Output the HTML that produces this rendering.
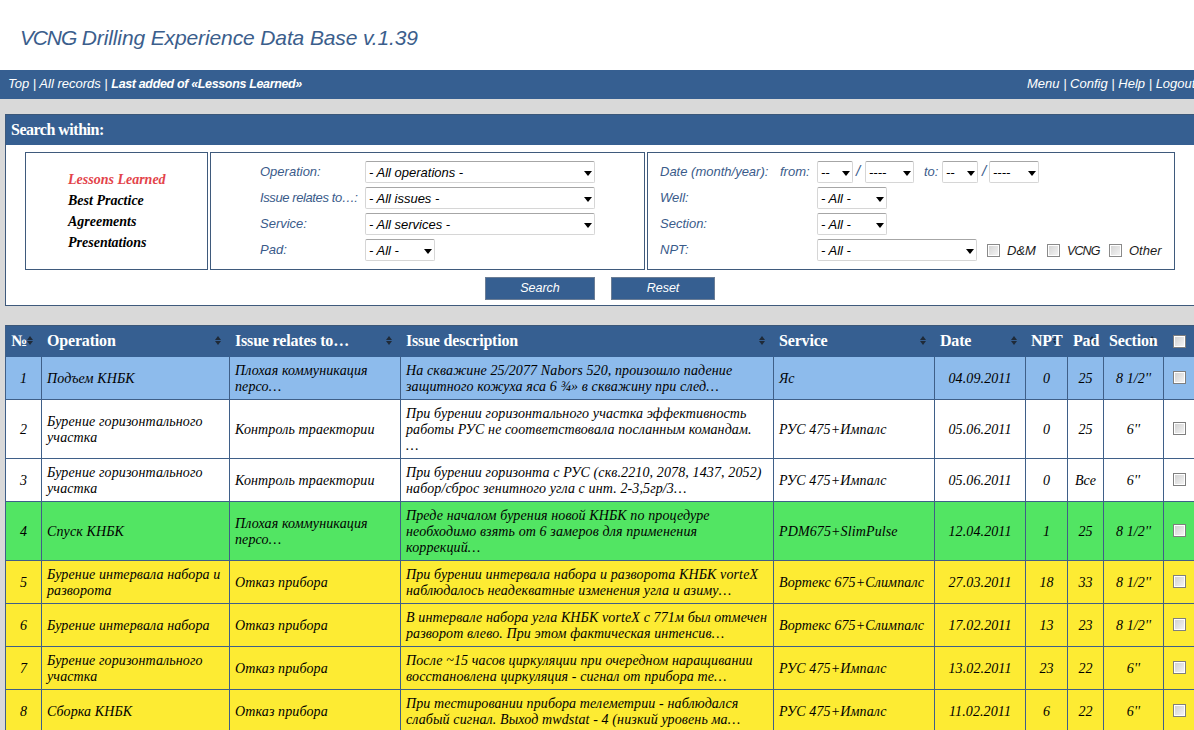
<!DOCTYPE html>
<html><head><meta charset="utf-8">
<style>
*{box-sizing:border-box}
html,body{margin:0;padding:0}
body{width:1194px;height:730px;overflow:hidden;position:relative;background:#d9d9d9;font-family:"Liberation Sans",sans-serif}
#top{position:absolute;left:0;top:0;width:1194px;height:70px;background:#fff}
#title{position:absolute;left:20px;top:26px;letter-spacing:-0.12px;font:italic 21px "Liberation Sans",sans-serif;color:#3b5e8c;white-space:nowrap}
#nav{position:absolute;left:0;top:70px;width:1194px;height:29px;background:#365f91;color:#fff;font:italic 13px "Liberation Sans",sans-serif;white-space:nowrap}
#nav .l{position:absolute;left:8px;top:6px}
#nav .r{position:absolute;left:1027px;top:6px}
#nav b{font-weight:bold;font-size:12.5px;letter-spacing:-0.35px}
#sb{position:absolute;left:5px;top:114px;width:1195px;height:192px;background:#fff;border:1px solid #3f5a7c;border-top:0}
#sbh{position:absolute;left:0;top:0;width:100%;height:31px;background:#365f91;box-shadow:inset 0 1px 0 #3b5778;color:#fff;letter-spacing:-0.5px;font:bold 16px "Liberation Serif",serif}
#sbh span{position:absolute;left:5px;top:7px}
.box{position:absolute;border:1px solid #3f5a7c;background:#fff}
.lst{position:absolute;font:bold italic 14px "Liberation Serif",serif;color:#000;line-height:21px}
.lbl{position:absolute;font:italic 13px "Liberation Sans",sans-serif;color:#3a5b8a;white-space:nowrap}
.sel{position:absolute;height:22px;border:1px solid #d6d6d6;border-top-color:#a6a6a6;border-radius:2px;background:#fff;font:italic 13px "Liberation Sans",sans-serif;color:#000;white-space:nowrap}
.sel span{position:absolute;left:3px;top:3px}
.sel i{position:absolute;right:2px;top:9px;width:0;height:0;border-left:4px solid transparent;border-right:4px solid transparent;border-top:5px solid #000}
.btn{position:absolute;top:277px;height:23px;background:#365f91;border:1px solid #6b7d95;color:#fff;font:italic 12.5px "Liberation Sans",sans-serif;text-align:center;line-height:21px}
.cb{position:absolute;width:13px;height:13px;border:1px solid #8a8a8a;box-shadow:inset 0 0 0 1px #fff;background:linear-gradient(135deg,#d2d2d2,#f6f6f6)}
.ck{position:absolute;font:italic 13px "Liberation Sans",sans-serif;color:#1b1b1b;white-space:nowrap}
#tb{position:absolute;left:5px;top:325px;width:1190px;table-layout:fixed;border-collapse:separate;border-spacing:0;border-left:1px solid #3f5f88;font:italic 14px "Liberation Serif",serif;color:#000}
#tb td{border-right:1px solid #3f5f88;border-bottom:1px solid #3f5f88;padding:2px 5px 0;line-height:16px;letter-spacing:0.12px;vertical-align:middle;white-space:nowrap;overflow:hidden}
#tb td.c{text-align:center;padding:2px 0 0}
#tb td.k{padding:0;line-height:0}
#tb td.k .cb2{display:block;margin:-1px 0 0 9px}
#tb tr.hd{height:32px;background:#365f91}
#tb th{position:relative;box-shadow:inset 0 1px 0 #3b5778;text-align:left;padding:0 5px;font:bold 16px "Liberation Serif",serif;letter-spacing:-0.18px;color:#fff;line-height:32px;white-space:nowrap;overflow:visible}
#tb th s{position:absolute;right:7.5px;top:11px;width:8px;height:10px;z-index:0}
#tb th u{position:relative;z-index:1;text-decoration:none}
#tb th s:before{content:"";position:absolute;left:0;top:0;border-left:3.75px solid transparent;border-right:3.75px solid transparent;border-bottom:4px solid #1f2a38}
#tb th s:after{content:"";position:absolute;left:0;top:5px;border-left:3.75px solid transparent;border-right:3.75px solid transparent;border-top:4px solid #1f2a38}
.cb2{display:inline-block;width:13px;height:13px;border:1px solid #7f7f7f;box-shadow:inset 0 0 0 1px #fff;background:linear-gradient(135deg,#cfcfcf,#f6f6f6);vertical-align:middle}
</style></head><body>
<div id="top"><div id="title"><span style="letter-spacing:-1.15px">VCNG</span> Drilling Experience Data Base v.1.39</div></div>
<div id="nav"><span class="l">Top | All records | <b>Last added of «Lessons Learned»</b></span><span class="r">Menu | Config | Help | Logout</span></div>
<div id="sb">
 <div id="sbh"><span>Search within:</span></div>
</div>
<!-- boxes positioned in page coordinates -->
<div class="box" style="left:25px;top:152px;width:183px;height:118px"></div>
<div class="box" style="left:210px;top:152px;width:435px;height:118px"></div>
<div class="box" style="left:647px;top:152px;width:528px;height:118px"></div>
<div class="lst" style="left:68px;top:169px"><span style="color:#e3434a">Lessons Learned</span><br>Best Practice<br>Agreements<br>Presentations</div>

<div class="lbl" style="left:260px;top:164px">Operation:</div>
<div class="lbl" style="left:260px;top:190px;letter-spacing:-0.4px">Issue relates to…:</div>
<div class="lbl" style="left:260px;top:216px">Service:</div>
<div class="lbl" style="left:260px;top:242px">Pad:</div>
<div class="sel" style="left:365px;top:161px;width:230px"><span>- All operations -</span><i></i></div>
<div class="sel" style="left:365px;top:187px;width:230px"><span>- All issues -</span><i></i></div>
<div class="sel" style="left:365px;top:213px;width:230px"><span>- All services -</span><i></i></div>
<div class="sel" style="left:365px;top:239px;width:70px"><span>- All -</span><i></i></div>

<div class="lbl" style="left:660px;top:164px">Date (month/year):</div><div class="lbl" style="left:780px;top:164px">from:</div>
<div class="lbl" style="left:660px;top:190px">Well:</div>
<div class="lbl" style="left:660px;top:216px">Section:</div>
<div class="lbl" style="left:660px;top:242px">NPT:</div>
<div class="sel" style="left:817px;top:161px;width:36px"><span>--</span><i></i></div>
<div class="lbl" style="left:856px;top:162px;font-size:15px">/</div>
<div class="sel" style="left:865px;top:161px;width:49px"><span>----</span><i></i></div>
<div class="lbl" style="left:924px;top:164px">to:</div>
<div class="sel" style="left:942px;top:161px;width:36px"><span>--</span><i></i></div>
<div class="lbl" style="left:982px;top:162px;font-size:15px">/</div>
<div class="sel" style="left:989px;top:161px;width:50px"><span>----</span><i></i></div>
<div class="sel" style="left:817px;top:187px;width:70px"><span>- All -</span><i></i></div>
<div class="sel" style="left:817px;top:213px;width:70px"><span>- All -</span><i></i></div>
<div class="sel" style="left:817px;top:239px;width:160px"><span>- All -</span><i></i></div>
<div class="cb" style="left:987px;top:244px"></div><div class="ck" style="left:1007px;top:243px">D&amp;M</div>
<div class="cb" style="left:1047px;top:244px"></div><div class="ck" style="left:1067px;top:244px;letter-spacing:-0.9px;font-size:12.5px">VCNG</div>
<div class="cb" style="left:1109px;top:244px"></div><div class="ck" style="left:1129px;top:243px">Other</div>
<div class="btn" style="left:485px;width:110px">Search</div>
<div class="btn" style="left:611px;width:104px">Reset</div>

<!-- TABLE -->
<table id="tb"><colgroup><col style="width:36px"><col style="width:188px"><col style="width:171px"><col style="width:373px"><col style="width:161px"><col style="width:91px"><col style="width:42px"><col style="width:36px"><col style="width:60px"><col style="width:32px"></colgroup>
<tr class="hd"><th><s></s><u>№</u></th><th><s></s><u>Operation</u></th><th><s></s><u>Issue relates to…</u></th><th><s></s><u>Issue description</u></th><th><s></s><u>Service</u></th><th><s></s><u>Date</u></th><th><s></s><u>NPT</u></th><th><s></s><u>Pad</u></th><th><s></s><u>Section</u></th><th class="c"><div class="cb2" style="position:absolute;left:9px;top:10px"></div></th></tr>
<tr style="background:#8dbbec;height:43px"><td class="c">1</td><td>Подъем КНБК</td><td>Плохая коммуникация<br>персо…</td><td>На скважине 25/2077 Nabors 520, произошло падение<br>защитного кожуха яса 6 ¾» в скважину при след…</td><td>Яс</td><td class="c">04.09.2011</td><td class="c">0</td><td class="c">25</td><td class="c">8 1/2''</td><td class="k"><div class="cb2"></div></td></tr>
<tr style="background:#ffffff;height:59px"><td class="c">2</td><td>Бурение горизонтального<br>участка</td><td>Контроль траектории</td><td>При бурении горизонтального участка эффективность<br>работы РУС не соответствовала посланным командам.<br>…</td><td>РУС 475+Импалс</td><td class="c">05.06.2011</td><td class="c">0</td><td class="c">25</td><td class="c">6''</td><td class="k"><div class="cb2"></div></td></tr>
<tr style="background:#ffffff;height:43px"><td class="c">3</td><td>Бурение горизонтального<br>участка</td><td>Контроль траектории</td><td>При бурении горизонта с РУС (скв.2210, 2078, 1437, 2052)<br>набор/сброс зенитного угла с инт. 2-3,5гр/3…</td><td>РУС 475+Импалс</td><td class="c">05.06.2011</td><td class="c">0</td><td class="c">Все</td><td class="c">6''</td><td class="k"><div class="cb2"></div></td></tr>
<tr style="background:#52e563;height:59px"><td class="c">4</td><td>Спуск КНБК</td><td>Плохая коммуникация<br>персо…</td><td>Преде началом бурения новой КНБК по процедуре<br>необходимо взять от 6 замеров для применения<br>коррекций…</td><td>PDM675+SlimPulse</td><td class="c">12.04.2011</td><td class="c">1</td><td class="c">25</td><td class="c">8 1/2''</td><td class="k"><div class="cb2"></div></td></tr>
<tr style="background:#fdeb33;height:43px"><td class="c">5</td><td>Бурение интервала набора и<br>разворота</td><td>Отказ прибора</td><td>При бурении интервала набора и разворота КНБК vorteX<br>наблюдалось неадекватные изменения угла и азиму…</td><td>Вортекс 675+Слимпалс</td><td class="c">27.03.2011</td><td class="c">18</td><td class="c">33</td><td class="c">8 1/2''</td><td class="k"><div class="cb2"></div></td></tr>
<tr style="background:#fdeb33;height:43px"><td class="c">6</td><td>Бурение интервала набора</td><td>Отказ прибора</td><td>В интервале набора угла КНБК vorteX с 771м был отмечен<br>разворот влево. При этом фактическая интенсив…</td><td>Вортекс 675+Слимпалс</td><td class="c">17.02.2011</td><td class="c">13</td><td class="c">23</td><td class="c">8 1/2''</td><td class="k"><div class="cb2"></div></td></tr>
<tr style="background:#fdeb33;height:43px"><td class="c">7</td><td>Бурение горизонтального<br>участка</td><td>Отказ прибора</td><td>После ~15 часов циркуляции при очередном наращивании<br>восстановлена циркуляция - сигнал от прибора те…</td><td>РУС 475+Импалс</td><td class="c">13.02.2011</td><td class="c">23</td><td class="c">22</td><td class="c">6''</td><td class="k"><div class="cb2"></div></td></tr>
<tr style="background:#fdeb33;height:43px"><td class="c">8</td><td>Сборка КНБК</td><td>Отказ прибора</td><td>При тестировании прибора телеметрии - наблюдался<br>слабый сигнал. Выход mwdstat - 4 (низкий уровень ма…</td><td>РУС 475+Импалс</td><td class="c">11.02.2011</td><td class="c">6</td><td class="c">22</td><td class="c">6''</td><td class="k"><div class="cb2"></div></td></tr>
</table>
</body></html>
